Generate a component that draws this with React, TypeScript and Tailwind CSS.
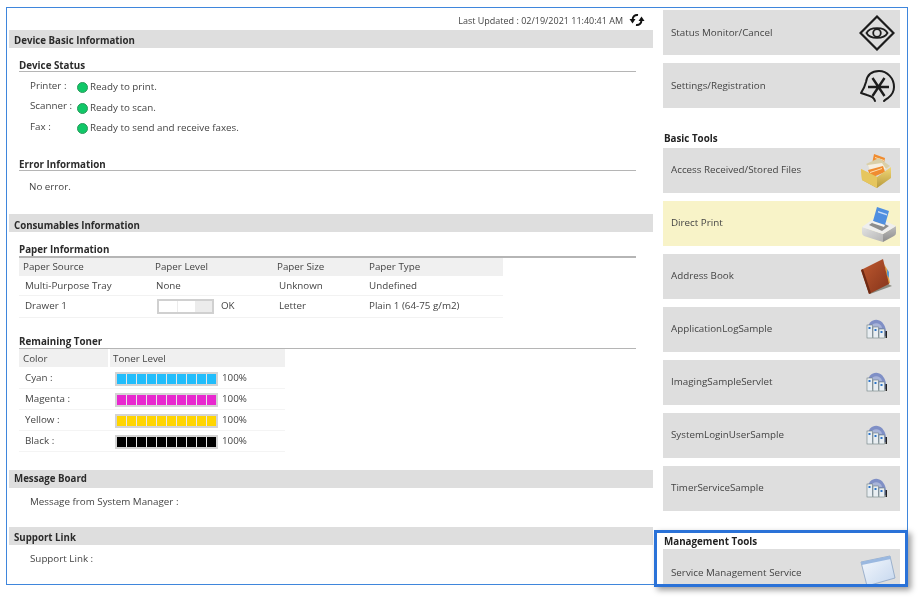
import React from "react";

const Band = ({ title, className = "" }: { title: string; className?: string }) => (
  <div className={`h-[18px] bg-[#dedede] pl-[5px] flex items-center text-[9.7px] font-bold text-[#2b2b2b] ${className}`}>{title}</div>
);

const Sub = ({ title, className = "" }: { title: string; className?: string }) => (
  <div className={`ml-[10px] mr-[17px] border-b border-[#b5b5b5] text-[9.8px] leading-[13px] font-bold text-[#2b2b2b] ${className}`}>{title}</div>
);

const Dot = () => (
  <span className="inline-block w-[11px] h-[11px] rounded-full bg-[#10c868] border border-[#2a9a5c] mr-[2px] shrink-0" />
);

const StatusRow = ({ label, text }: { label: string; text: string }) => (
  <div className="h-[20.5px] flex pl-[21px]">
    <span className="w-[47px] leading-[12px] pt-[0.5px]">{label}</span>
    <span className="flex items-center h-[12px] mt-[2.5px]">
      <Dot />
      {text}
    </span>
  </div>
);

const PaperBar = () => (
  <span className="flex w-[57px] h-[15px] border-2 border-[#d0d0d0] bg-[#ececec] gap-px mr-[7px]">
    <span className="w-[18px] bg-white" />
    <span className="w-[17px] bg-white" />
  </span>
);

const TonerRow = ({ label, color }: { label: string; color: string }) => (
  <div className="h-[21px] pt-[2px] grid grid-cols-[90px_1fr] pl-[6px] items-center border-b border-[#f4f4f4]">
    <span>{label}</span>
    <span className="flex items-center">
      <span className="flex gap-px w-[103px] h-[14px] border-2 border-[#d4d4d4] bg-[#e8e8e8]">
        {Array.from({ length: 10 }).map((_, i) => (
          <span key={i} className="flex-1" style={{ backgroundColor: color }} />
        ))}
      </span>
      <span className="ml-[4px]">100%</span>
    </span>
  </div>
);

const RefreshIcon = () => (
  <svg className="ml-[6px] mb-[1px]" width="16" height="14" viewBox="0 0 16 14" fill="none">
    <path d="M3.5 7 C3.5 3.5 6 1.5 9 2" stroke="#111" strokeWidth="2" />
    <path d="M0.5 6 L6.5 6 L3.5 10.5 Z" fill="#111" />
    <path d="M12.5 7 C12.5 10.5 10 12.5 7 12" stroke="#111" strokeWidth="2" />
    <path d="M9.5 8 L15.5 8 L12.5 3.5 Z" fill="#111" />
  </svg>
);

const EyeIcon = () => (
  <svg width="36" height="36" viewBox="0 0 36 36" fill="none" stroke="#1c1c1c">
    <path d="M18 1.5 L34.5 18 L18 34.5 L1.5 18 Z" strokeWidth="2.2" />
    <path d="M7.5 18 C11 11.5 25 11.5 28.5 18 C25 24.5 11 24.5 7.5 18 Z" strokeWidth="1.8" />
    <circle cx="18" cy="18" r="3.8" strokeWidth="1.8" />
  </svg>
);

const HeadIcon = () => (
  <svg width="36" height="36" viewBox="0 0 36 36" fill="none" stroke="#1c1c1c" strokeWidth="2">
    <path d="M25 33 C27 31 28 31 29 30 C33 27 35 24 35 19 C35 10 28 3 20 3 C12 3 8 8 7 14 C6 18 4 22 2 25 L8 27 C12 28 15 29 16 33" strokeLinecap="round" strokeLinejoin="round" />
    <path d="M9 19 H30 M13.5 10 L25.5 28 M25.5 10 L13.5 28" strokeWidth="2.4" />
  </svg>
);

const BoxIcon = () => (
  <svg width="34" height="38" viewBox="0 0 34 38">
    <defs>
      <linearGradient id="bx" x1="0" y1="0" x2="0" y2="1">
        <stop offset="0" stopColor="#f2d878" />
        <stop offset="1" stopColor="#b89a3c" />
      </linearGradient>
    </defs>
    <path d="M14 2 L25 6 L23 16 L12 12 Z" fill="#f08c30" />
    <path d="M15 5 L24 8 L24 9 L15 6 Z" fill="#fde0b0" />
    <path d="M6 12 L19 6 L30 14 L18 22 Z" fill="#d9cfa8" />
    <path d="M8 13 L22 11 L26 17 L11 22 Z" fill="#f6efe0" />
    <path d="M8 18 L23 14 L25 20 L11 26 Z" fill="#f08c30" />
    <path d="M10 20 L22 16 L22 17 L10 21 Z" fill="#fde0b0" />
    <path d="M1 17 L17 25 L31 15 L31 26 L17 36 L2 28 Z" fill="url(#bx)" />
    <path d="M1 17 L17 25 L17 36 L2 28 Z" fill="#e6c65e" />
  </svg>
);

const PrinterIcon = () => (
  <svg className="ml-[3px]" width="36" height="36" viewBox="0 0 36 36">
    <defs>
      <linearGradient id="prl" x1="0" y1="0" x2="1" y2="1">
        <stop offset="0" stopColor="#e2e2e2" />
        <stop offset="1" stopColor="#b4b4b4" />
      </linearGradient>
      <linearGradient id="prr" x1="0" y1="0" x2="0" y2="1">
        <stop offset="0" stopColor="#bdbdbd" />
        <stop offset="1" stopColor="#8c8c8c" />
      </linearGradient>
    </defs>
    <path d="M1 21 L22 28 L22 36 Q12 33 3 30 Q1 29 1 27 Z" fill="url(#prl)" />
    <path d="M22 28 L35 20 L35 27 Q35 29 33 30 L22 36 Z" fill="url(#prr)" />
    <path d="M1 21 L15 11 L35 20 L22 28 Z" fill="#efefef" />
    <path d="M8 19 L15 14 L28 20 L21 25 Z" fill="#8d8d8d" />
    <path d="M16 1 L28 5 L24 19 L12 15 Z" fill="#4f8fe0" />
    <path d="M17 5 L26 8 L26 9.5 L17 6.5 Z" fill="#c6dcf8" />
    <path d="M12 15 L24 19 L23 21 L11 17 Z" fill="#f4f4f4" />
  </svg>
);

const BookIcon = () => (
  <svg width="34" height="38" viewBox="0 0 34 38">
    <defs>
      <linearGradient id="bk" x1="0" y1="0" x2="1" y2="1">
        <stop offset="0" stopColor="#c05a30" />
        <stop offset="1" stopColor="#84331a" />
      </linearGradient>
    </defs>
    <path d="M10 36 L32 28 L28 26 L10 33 Z" fill="#8a8a80" />
    <path d="M24 6 L27 11 L28 16 L29 20 L30 25 L28 26 L25 10 Z" fill="#e0a040" />
    <path d="M27 11 L29 14 L29 20 L27 17 Z" fill="#5a9ad0" />
    <path d="M1 12 L23 1 L29 26 L9 36 Z" fill="url(#bk)" />
    <path d="M1 12 L3 11 L11 35 L9 36 Z" fill="#6e2a14" />
  </svg>
);

const AppIcon = () => (
  <svg className="-mt-[2px] mr-[1px]" width="22" height="22" viewBox="0 0 22 22">
    <path d="M1 13 C2 -2 18 -2 20 13 L20 18 L1 18 Z" fill="#7f8fc6" />
    <path d="M5 9 C6 4 15 4 16 10 Z" fill="#a8b4d8" />
    <rect x="1" y="7" width="5.5" height="13" fill="#e9eef2" stroke="#6f7f80" strokeWidth="0.6" />
    <rect x="7" y="9" width="5.5" height="11" fill="#e9eef2" stroke="#6f7f80" strokeWidth="0.6" />
    <rect x="13" y="11" width="5.5" height="9" fill="#e9eef2" stroke="#6f7f80" strokeWidth="0.6" />
    <rect x="2.5" y="9" width="2" height="2" fill="#2c74c8" />
    <rect x="8.5" y="11" width="2" height="2" fill="#2c74c8" />
    <rect x="14.5" y="13" width="2" height="2" fill="#2c74c8" />
    <rect x="19.5" y="13" width="1.5" height="7" fill="#222" />
  </svg>
);

const WindowIcon = () => (
  <svg className="ml-[1px]" width="36" height="34" viewBox="0 0 36 34">
    <defs>
      <linearGradient id="wn" x1="0" y1="0" x2="1" y2="1">
        <stop offset="0" stopColor="#f6f9fd" />
        <stop offset="1" stopColor="#c4d6ee" />
      </linearGradient>
    </defs>
    <path d="M1 7 L30 1 L35 23 L7 31 Z" fill="url(#wn)" stroke="#8aa3c4" strokeWidth="0.8" />
    <path d="M1 7 L30 1 L30.8 4 L1.8 10 Z" fill="#9ab8e0" />
  </svg>
);

const Tile = ({ label, icon, active, labelClass = "" }: { label: string; icon: React.ReactNode; active?: boolean; labelClass?: string }) => (
  <div className={`h-[45px] shrink-0 flex items-center justify-between pl-[8px] ${active ? "bg-[#f8f3c8]" : "bg-[#dedede]"}`}>
    <span className={`text-[#444] ${labelClass}`}>{label}</span>
    <span className="w-[40px] mr-[3px] flex justify-center">{icon}</span>
  </div>
);

export default function App() {
  return (
    <div
      className="relative w-[921px] h-[599px] bg-white overflow-hidden pt-[7px] pl-[6px] text-[9.8px] text-[#444] blur-[0.3px]"
      style={{ fontFamily: '"Open Sans", "Noto Sans", sans-serif' }}
    >
      <div className="w-[902px] h-[578px] border border-[#3f86dc] flex overflow-hidden">
        <div className="w-[644px] ml-[2px] shrink-0">
          <div className="h-[22px] flex justify-end items-end pr-[8px] pb-[2px]">
            <span className="text-[9px] leading-[14px]">Last Updated : 02/19/2021 11:40:41 AM</span>
            <RefreshIcon />
          </div>
          <Band title="Device Basic Information" className="pt-[5px]" />
          <Sub title="Device Status" className="mt-[11px] h-[13px]" />
          <div className="mt-[7px]">
            <StatusRow label="Printer :" text="Ready to print." />
            <StatusRow label="Scanner :" text="Ready to scan." />
            <StatusRow label="Fax :" text="Ready to send and receive faxes." />
          </div>
          <Sub title="Error Information" className="mt-[17px] h-[13px]" />
          <div className="pl-[20px] mt-[9px] leading-[13px]">No error.</div>

          <Band title="Consumables Information" className="mt-[21.5px] pt-[6px]" />
          <Sub title="Paper Information" className="mt-[10.5px] h-[15px] border-b-2" />
          <div className="ml-[10px] w-[484px]">
            <div className="h-[18px] grid grid-cols-[132px_122px_92px_1fr] items-center bg-[#f0f0f0] pl-[4px] pt-[2px]">
              <span>Paper Source</span>
              <span>Paper Level</span>
              <span>Paper Size</span>
              <span>Paper Type</span>
            </div>
            <div className="h-[20px] grid grid-cols-[131px_123px_90px_1fr] items-center border-b border-[#f2f2f2] pl-[6px] pt-[2px]">
              <span>Multi-Purpose Tray</span>
              <span>None</span>
              <span>Unknown</span>
              <span>Undefined</span>
            </div>
            <div className="h-[22px] grid grid-cols-[132px_122px_90px_1fr] items-center border-b border-[#f2f2f2] pl-[6px] pt-[1px]">
              <span>Drawer 1</span>
              <span className="flex items-center">
                <PaperBar />
                OK
              </span>
              <span>Letter</span>
              <span>Plain 1 (64-75 g/m2)</span>
            </div>
          </div>

          <Sub title="Remaining Toner" className="mt-[17.5px] h-[14px]" />
          <div className="ml-[10px] w-[266px]">
            <div className="h-[18px] grid grid-cols-[87px_1fr] items-center bg-[#f0f0f0] pl-[4px]">
              <span className="h-full flex items-center pt-[2px] border-r-2 border-white">Color</span>
              <span className="pl-[3px] pt-[2px]">Toner Level</span>
            </div>
            <div className="mt-[0.5px]">
              <TonerRow label="Cyan :" color="#22bdfb" />
              <TonerRow label="Magenta :" color="#e828cf" />
              <TonerRow label="Yellow :" color="#ffd500" />
              <TonerRow label="Black :" color="#000000" />
            </div>
          </div>

          <Band title="Message Board" className="mt-[18px] pt-[2px]" />
          <div className="pl-[21px] mt-[7.5px] leading-[14px]">Message from System Manager :</div>
          <Band title="Support Link" className="mt-[18px] pt-[4px]" />
          <div className="pl-[21px] mt-[7px] leading-[14px]">Support Link :</div>
        </div>

        <div className="w-[237px] ml-[10px] pt-[2px] flex flex-col gap-[8px] shrink-0">
          <Tile label="Status Monitor/Cancel" icon={<EyeIcon />} labelClass="mt-[1px]" />
          <Tile label="Settings/Registration" icon={<HeadIcon />} labelClass="mt-[1px]" />
          <div className="h-[32px] shrink-0 flex items-end -mb-[8px] pl-[1px] pb-[1px] font-bold text-[#222]">Basic Tools</div>
          <Tile label="Access Received/Stored Files" icon={<BoxIcon />} />
          <Tile label="Direct Print" icon={<PrinterIcon />} active />
          <Tile label="Address Book" icon={<BookIcon />} />
          <Tile label="ApplicationLogSample" icon={<AppIcon />} />
          <Tile label="ImagingSampleServlet" icon={<AppIcon />} />
          <Tile label="SystemLoginUserSample" icon={<AppIcon />} />
          <Tile label="TimerServiceSample" icon={<AppIcon />} />
          <div className="h-[31px] shrink-0 flex items-end -mb-[9px] pl-[1px] font-bold text-[#222]">Management Tools</div>
          <Tile label="Service Management Service" icon={<WindowIcon />} labelClass="mt-[3px]" />
        </div>
      </div>
      <div className="absolute left-[654px] top-[530px] w-[254px] h-[57px] border-[3px] border-[#2a72d8] shadow-[3px_3px_6px_rgba(0,0,0,0.4)]" />
    </div>
  );
}
